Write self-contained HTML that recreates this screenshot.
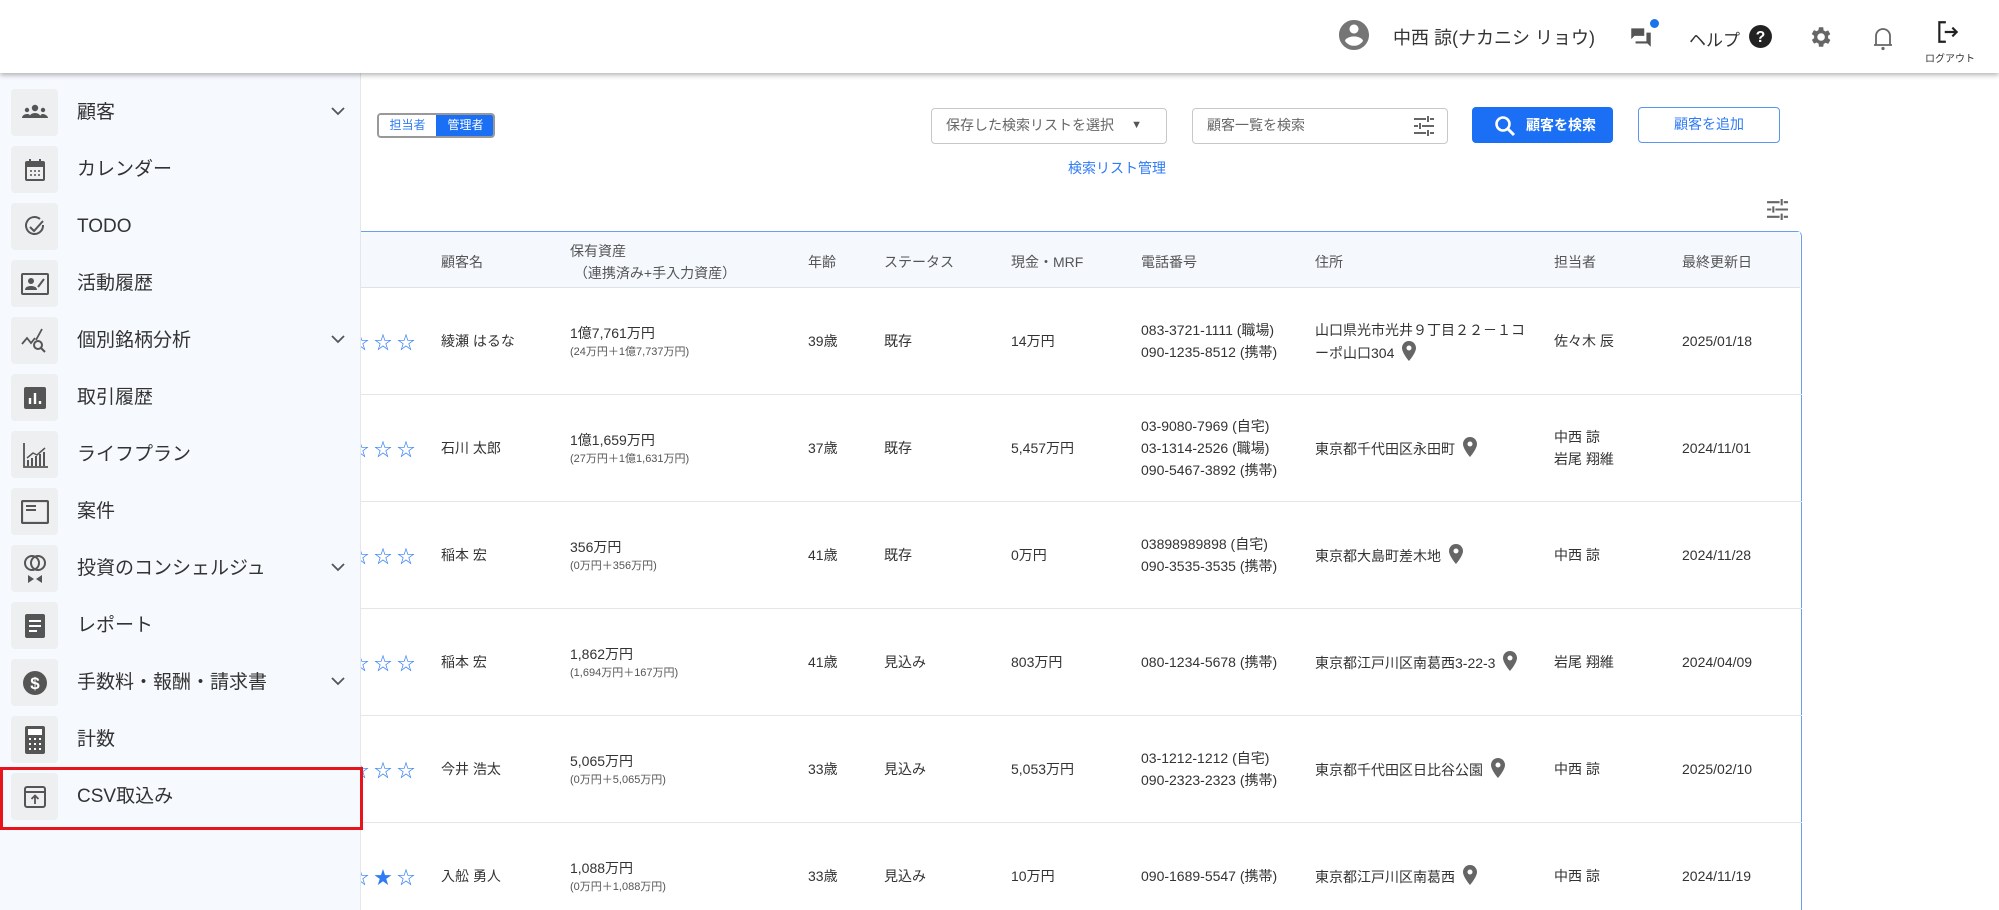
<!DOCTYPE html>
<html><head><meta charset="utf-8"><style>
*{box-sizing:border-box;margin:0;padding:0}
html{width:1999px;height:910px;overflow:hidden}
body{width:1999px;height:910px;overflow:hidden;background:#fff;font-family:"Liberation Sans","Noto Sans CJK JP",sans-serif;color:#333;position:relative}
.a{position:absolute}
#hdr{left:0;top:0;width:1999px;height:73px;background:#fff;box-shadow:0 2px 5px rgba(0,0,0,.3);z-index:5}
#side{left:0;top:73px;width:361px;height:837px;background:#f6f9fe;border-right:1px solid #e3e6ea;z-index:4}
.it{position:absolute;left:0;width:361px;height:47px}
.ib{position:absolute;left:11px;top:0;width:47px;height:47px;background:#eeeff1;border-radius:4px;display:flex;align-items:center;justify-content:center}
.it .t{position:absolute;left:77px;top:0;line-height:47px;font-size:19px;color:#333}
.chev{position:absolute;left:330px;top:16px}
.th{font-size:14px;color:#555}
.c{position:absolute;font-size:14px;color:#333;line-height:22px}
.s{font-size:11px;color:#555;line-height:16px}
.row{position:absolute;left:361px;width:1441px;border-bottom:1px solid #e4e6ea}
.star{position:absolute;font-size:18px;color:#2f7bf5}
.pin{display:inline-block;vertical-align:-3px;margin-left:8px}
</style></head><body>
<svg width="0" height="0" style="position:absolute"><defs><symbol id="pin" viewBox="0 0 14 20"><path d="M7 0C3.1 0 0 3.1 0 7c0 5 7 13 7 13s7-8 7-13c0-3.9-3.1-7-7-7zm0 9.5A2.5 2.5 0 117 4.5a2.5 2.5 0 010 5z" fill="#666"/></symbol></defs></svg>
<div id="hdr" class="a">
 <svg class="a" style="left:1336px;top:17px" width="36" height="36" viewBox="0 0 24 24"><path fill="#757575" d="M12 2C6.48 2 2 6.48 2 12s4.48 10 10 10 10-4.48 10-10S17.52 2 12 2zm0 3c1.66 0 3 1.34 3 3s-1.34 3-3 3-3-1.34-3-3 1.34-3 3-3zm0 14.2c-2.5 0-4.71-1.28-6-3.22.03-1.99 4-3.08 6-3.08 1.99 0 5.97 1.09 6 3.08-1.29 1.94-3.5 3.22-6 3.22z"/></svg>
 <div class="a" style="left:1393px;top:24px;font-size:18px;color:#333">中西 諒(ナカニシ リョウ)</div>
 <svg class="a" style="left:1628px;top:24px" width="26" height="26" viewBox="0 0 24 24"><path fill="#555" d="M15 4H3v10l3-3h9zm6 4h-4v8H7v2l1 0h10l3 3z"/></svg>
 <div class="a" style="left:1650px;top:19px;width:9px;height:9px;border-radius:50%;background:#1a73e8"></div>
 <div class="a" style="left:1689px;top:26px;font-size:17px;color:#333">ヘルプ</div>
 <svg class="a" style="left:1748px;top:24px" width="25" height="25" viewBox="0 0 24 24"><circle cx="12" cy="12" r="11" fill="#222"/><text x="12" y="17.5" font-size="15" font-weight="bold" fill="#fff" text-anchor="middle" font-family="Liberation Sans">?</text></svg>
 <svg class="a" style="left:1807px;top:24px" width="26" height="26" viewBox="0 0 24 24"><path fill="#666" d="M19.4 13a7.5 7.5 0 000-2l2.1-1.6-2-3.5-2.5 1a7 7 0 00-1.7-1L15 3h-4l-.4 2.7a7 7 0 00-1.7 1l-2.5-1-2 3.5L6.6 11a7.5 7.5 0 000 2l-2.1 1.6 2 3.5 2.5-1a7 7 0 001.7 1L11 21h4l.4-2.7a7 7 0 001.7-1l2.5 1 2-3.5zM13 15.5a3.5 3.5 0 110-7 3.5 3.5 0 010 7z"/></svg>
 <svg class="a" style="left:1871px;top:24px" width="24" height="28" viewBox="0 0 24 28"><path fill="none" stroke="#666" stroke-width="1.8" d="M5 21V12a7 7 0 0114 0v9zM3 21h18"/><circle cx="12" cy="24.5" r="1.6" fill="#666"/></svg>
 <svg class="a" style="left:1935px;top:19px" width="26" height="26" viewBox="0 0 24 24"><path fill="none" stroke="#222" stroke-width="2" d="M10 3H4v18h6M9 12h11M16 8l4 4-4 4"/></svg>
 <div class="a" style="left:1925px;top:50px;font-size:10px;color:#333">ログアウト</div>
</div>

<div id="side" class="a">
 <div class="it" style="top:16px"><div class="ib"><svg width="28" height="20" viewBox="0 0 28 20"><circle cx="14" cy="5" r="3.2" fill="#555"/><path d="M8 15c0-3 3-5 6-5s6 2 6 5z" fill="#555"/><circle cx="6" cy="7" r="2.2" fill="#555"/><circle cx="22" cy="7" r="2.2" fill="#555"/><path d="M1 15c0-2 2-4 5-4s3 1 3 4zM19 15c0-3 1-4 3-4s5 2 5 4z" fill="#555"/></svg></div><div class="t">顧客</div><svg class="chev" width="16" height="12"><path d="M2 3l6 6 6-6" fill="none" stroke="#555" stroke-width="1.8"/></svg></div>
 <div class="it" style="top:73px"><div class="ib"><svg width="22" height="24" viewBox="0 0 22 24"><rect x="2" y="4" width="18" height="18" rx="1" fill="none" stroke="#555" stroke-width="2"/><rect x="2" y="4" width="18" height="5" fill="#555"/><path d="M6 1v5M16 1v5" stroke="#555" stroke-width="2"/><path d="M6 13h2M10 13h2M14 13h2M6 17h2M10 17h2M14 17h2" stroke="#555" stroke-width="1.5"/></svg></div><div class="t">カレンダー</div></div>
 <div class="it" style="top:130px"><div class="ib"><svg width="24" height="24" viewBox="0 0 24 24"><path d="M20 10a8.5 8.5 0 11-3-6" fill="none" stroke="#555" stroke-width="2"/><path d="M7 12l4 4 9-10" fill="none" stroke="#555" stroke-width="2"/></svg></div><div class="t">TODO</div></div>
 <div class="it" style="top:187px"><div class="ib"><svg width="28" height="22" viewBox="0 0 28 22"><rect x="1" y="1" width="26" height="20" rx="1" fill="none" stroke="#555" stroke-width="2"/><circle cx="10" cy="8" r="3" fill="#555"/><path d="M4 17c0-3 3-4 6-4s6 1 6 4z" fill="#555"/><path d="M17 14l6-8" stroke="#555" stroke-width="2"/></svg></div><div class="t">活動履歴</div></div>
 <div class="it" style="top:244px"><div class="ib"><svg width="28" height="26" viewBox="0 0 28 26"><path d="M1 16l5-6 4 5 4-5M15 12l6-11" fill="none" stroke="#555" stroke-width="1.8"/><circle cx="17" cy="17" r="4" fill="none" stroke="#555" stroke-width="2"/><path d="M20 20l4 4" stroke="#555" stroke-width="2"/></svg></div><div class="t">個別銘柄分析</div><svg class="chev" width="16" height="12"><path d="M2 3l6 6 6-6" fill="none" stroke="#555" stroke-width="1.8"/></svg></div>
 <div class="it" style="top:301px"><div class="ib"><svg width="22" height="22" viewBox="0 0 22 22"><rect width="22" height="22" rx="2" fill="#555"/><path d="M6 17v-6M11 17V6M16 17v-3" stroke="#fff" stroke-width="2.4"/></svg></div><div class="t">取引履歴</div></div>
 <div class="it" style="top:358px"><div class="ib"><svg width="26" height="26" viewBox="0 0 26 26"><path d="M2 1v24h24" fill="none" stroke="#555" stroke-width="1.8"/><path d="M6 24v-6M10 24v-8M14 24v-10M18 24v-12M22 24v-14" stroke="#555" stroke-width="2"/><path d="M5 16l6-5 4 2 8-7" fill="none" stroke="#555" stroke-width="1.5"/></svg></div><div class="t">ライフプラン</div></div>
 <div class="it" style="top:415px"><div class="ib"><svg width="28" height="24" viewBox="0 0 28 24"><rect x="1" y="1" width="26" height="22" rx="1" fill="none" stroke="#555" stroke-width="2.2"/><path d="M5 6h10M5 10h10" stroke="#555" stroke-width="2"/></svg></div><div class="t">案件</div></div>
 <div class="it" style="top:472px"><div class="ib"><svg width="26" height="30" viewBox="0 0 26 30"><circle cx="10" cy="9" r="7" fill="none" stroke="#555" stroke-width="2"/><circle cx="16" cy="9" r="7" fill="none" stroke="#555" stroke-width="2"/><path d="M6 21l6 4-6 4zM20 21l-6 4 6 4z" fill="#555"/></svg></div><div class="t">投資のコンシェルジュ</div><svg class="chev" width="16" height="12"><path d="M2 3l6 6 6-6" fill="none" stroke="#555" stroke-width="1.8"/></svg></div>
 <div class="it" style="top:529px"><div class="ib"><svg width="20" height="24" viewBox="0 0 20 24"><rect width="20" height="24" rx="2" fill="#555"/><path d="M4 7h12M4 12h12M4 17h8" stroke="#fff" stroke-width="2"/></svg></div><div class="t">レポート</div></div>
 <div class="it" style="top:586px"><div class="ib"><svg width="26" height="26" viewBox="0 0 26 26"><circle cx="13" cy="13" r="12" fill="#555"/><text x="13" y="19" font-size="17" font-weight="bold" fill="#fff" text-anchor="middle" font-family="Liberation Sans">$</text></svg></div><div class="t">手数料・報酬・請求書</div><svg class="chev" width="16" height="12"><path d="M2 3l6 6 6-6" fill="none" stroke="#555" stroke-width="1.8"/></svg></div>
 <div class="it" style="top:643px"><div class="ib"><svg width="20" height="28" viewBox="0 0 20 28"><rect width="20" height="28" rx="2" fill="#555"/><rect x="3" y="3" width="14" height="6" fill="#fff"/><path d="M4 13h2M9 13h2M14 13h2M4 18h2M9 18h2M14 18h2M4 23h2M9 23h2M14 23h2" stroke="#fff" stroke-width="2"/></svg></div><div class="t">計数</div></div>
 <div class="it" style="top:700px"><div class="ib"><svg width="24" height="24" viewBox="0 0 24 24"><rect x="2" y="2" width="20" height="20" rx="2" fill="none" stroke="#555" stroke-width="2"/><path d="M2 7h20" stroke="#555" stroke-width="2"/><path d="M12 19v-8M8.5 14l3.5-3.5 3.5 3.5" fill="none" stroke="#555" stroke-width="1.8"/></svg></div><div class="t">CSV取込み</div></div>
</div>
<div class="a" style="left:0;top:767px;width:363px;height:63px;border:3px solid #e8141c;z-index:6"></div>

<div class="a" style="left:377px;top:113px;width:118px;height:25px;border:2px solid #999;border-radius:4px;overflow:hidden;font-size:12px">
 <div class="a" style="left:0;top:0;width:57px;height:21px;background:#fff;color:#2f7bf5;text-align:center;line-height:21px">担当者</div>
 <div class="a" style="left:57px;top:0;width:59px;height:21px;background:#1a6ff5;color:#fff;text-align:center;line-height:21px">管理者</div>
</div>
<div class="a" style="left:931px;top:108px;width:236px;height:36px;border:1.5px solid #c8c8c8;border-radius:4px;font-size:14px;color:#666;line-height:33px;padding-left:14px">保存した検索リストを選択<span style="position:absolute;right:24px;font-size:11px;color:#555">▼</span></div>
<div class="a" style="left:1192px;top:108px;width:256px;height:36px;border:1.5px solid #c8c8c8;border-radius:4px;font-size:14px;color:#666;line-height:33px;padding-left:14px">顧客一覧を検索
 <svg class="a" style="right:12px;top:7px" width="22" height="20" viewBox="0 0 22 20"><path d="M1 3h12M17 3h4M15 0v6M1 10h4M9 10h12M7 7v6M1 17h12M17 17h4M15 14v6" stroke="#666" stroke-width="2"/></svg></div>
<div class="a" style="left:1472px;top:107px;width:141px;height:36px;background:#1a6ff5;border-radius:4px;color:#fff;font-size:14px;line-height:36px;padding-left:54px;font-weight:bold">顧客を検索
 <svg class="a" style="left:22px;top:8px" width="22" height="22" viewBox="0 0 22 22"><circle cx="9" cy="9" r="6.5" fill="none" stroke="#fff" stroke-width="2.6"/><path d="M14 14l6 6" stroke="#fff" stroke-width="3"/></svg></div>
<div class="a" style="left:1638px;top:107px;width:142px;height:36px;border:1.5px solid #5b95f0;border-radius:4px;color:#2f7bf5;font-size:14px;line-height:33px;text-align:center">顧客を追加</div>
<div class="a" style="left:1068px;top:158px;font-size:14px;color:#2f7bf5">検索リスト管理</div>
<svg class="a" style="left:1766px;top:199px" width="23" height="21" viewBox="0 0 22 20"><path d="M1 3h12M17 3h4M15 0v6M1 10h4M9 10h12M7 7v6M1 17h12M17 17h4M15 14v6" stroke="#666" stroke-width="2"/></svg>

<div class="a" style="left:300px;top:231px;width:1502px;height:679px;border:1.5px solid #6a9ff0;border-bottom:none;border-radius:5px 5px 0 0"></div>
<div class="a" style="left:300px;top:232px;width:1500px;height:56px;background:#f5f8fd;border-bottom:1px solid #dfe3e8"></div>
<div class="a th" style="left:441px;top:252px">顧客名</div>
<div class="a th" style="left:570px;top:240px;line-height:22px">保有資産<br>&nbsp;（連携済み+手入力資産）</div>
<div class="a th" style="left:808px;top:252px">年齢</div>
<div class="a th" style="left:884px;top:252px">ステータス</div>
<div class="a th" style="left:1011px;top:252px">現金・MRF</div>
<div class="a th" style="left:1141px;top:252px">電話番号</div>
<div class="a th" style="left:1315px;top:252px">住所</div>
<div class="a th" style="left:1554px;top:252px">担当者</div>
<div class="a th" style="left:1682px;top:252px">最終更新日</div>

<div class="row" style="top:288px;height:107px"></div>
<div class="row" style="top:395px;height:107px"></div>
<div class="row" style="top:502px;height:107px"></div>
<div class="row" style="top:609px;height:107px"></div>
<div class="row" style="top:716px;height:107px"></div>

<span class="star" style="left:351px;top:329px">☆</span><span class="star" style="left:374px;top:329px">☆</span><span class="star" style="left:397px;top:329px">☆</span>
<div class="c" style="left:441px;top:330px">綾瀬 はるな</div>
<div class="c" style="left:570px;top:322px">1億7,761万円<div class="s">(24万円＋1億7,737万円)</div></div>
<div class="c" style="left:808px;top:330px">39歳</div><div class="c" style="left:884px;top:330px">既存</div><div class="c" style="left:1011px;top:330px">14万円</div>
<div class="c" style="left:1141px;top:319px">083-3721-1111 (職場)<br>090-1235-8512 (携帯)</div>
<div class="c" style="left:1315px;top:319px">山口県光市光井９丁目２２－１コ<br>ーポ山口304<svg class="pin" width="14" height="20"><use href="#pin"/></svg></div>
<div class="c" style="left:1554px;top:330px">佐々木 辰</div><div class="c" style="left:1682px;top:330px">2025/01/18</div>

<span class="star" style="left:351px;top:436px">☆</span><span class="star" style="left:374px;top:436px">☆</span><span class="star" style="left:397px;top:436px">☆</span>
<div class="c" style="left:441px;top:437px">石川 太郎</div>
<div class="c" style="left:570px;top:429px">1億1,659万円<div class="s">(27万円＋1億1,631万円)</div></div>
<div class="c" style="left:808px;top:437px">37歳</div><div class="c" style="left:884px;top:437px">既存</div><div class="c" style="left:1011px;top:437px">5,457万円</div>
<div class="c" style="left:1141px;top:415px">03-9080-7969 (自宅)<br>03-1314-2526 (職場)<br>090-5467-3892 (携帯)</div>
<div class="c" style="left:1315px;top:437px">東京都千代田区永田町<svg class="pin" width="14" height="20"><use href="#pin"/></svg></div>
<div class="c" style="left:1554px;top:426px">中西 諒<br>岩尾 翔維</div><div class="c" style="left:1682px;top:437px">2024/11/01</div>

<span class="star" style="left:351px;top:543px">☆</span><span class="star" style="left:374px;top:543px">☆</span><span class="star" style="left:397px;top:543px">☆</span>
<div class="c" style="left:441px;top:544px">稲本 宏</div>
<div class="c" style="left:570px;top:536px">356万円<div class="s">(0万円＋356万円)</div></div>
<div class="c" style="left:808px;top:544px">41歳</div><div class="c" style="left:884px;top:544px">既存</div><div class="c" style="left:1011px;top:544px">0万円</div>
<div class="c" style="left:1141px;top:533px">03898989898 (自宅)<br>090-3535-3535 (携帯)</div>
<div class="c" style="left:1315px;top:544px">東京都大島町差木地<svg class="pin" width="14" height="20"><use href="#pin"/></svg></div>
<div class="c" style="left:1554px;top:544px">中西 諒</div><div class="c" style="left:1682px;top:544px">2024/11/28</div>

<span class="star" style="left:351px;top:650px">☆</span><span class="star" style="left:374px;top:650px">☆</span><span class="star" style="left:397px;top:650px">☆</span>
<div class="c" style="left:441px;top:651px">稲本 宏</div>
<div class="c" style="left:570px;top:643px">1,862万円<div class="s">(1,694万円＋167万円)</div></div>
<div class="c" style="left:808px;top:651px">41歳</div><div class="c" style="left:884px;top:651px">見込み</div><div class="c" style="left:1011px;top:651px">803万円</div>
<div class="c" style="left:1141px;top:651px">080-1234-5678 (携帯)</div>
<div class="c" style="left:1315px;top:651px">東京都江戸川区南葛西3-22-3<svg class="pin" width="14" height="20"><use href="#pin"/></svg></div>
<div class="c" style="left:1554px;top:651px">岩尾 翔維</div><div class="c" style="left:1682px;top:651px">2024/04/09</div>

<span class="star" style="left:351px;top:757px">☆</span><span class="star" style="left:374px;top:757px">☆</span><span class="star" style="left:397px;top:757px">☆</span>
<div class="c" style="left:441px;top:758px">今井 浩太</div>
<div class="c" style="left:570px;top:750px">5,065万円<div class="s">(0万円＋5,065万円)</div></div>
<div class="c" style="left:808px;top:758px">33歳</div><div class="c" style="left:884px;top:758px">見込み</div><div class="c" style="left:1011px;top:758px">5,053万円</div>
<div class="c" style="left:1141px;top:747px">03-1212-1212 (自宅)<br>090-2323-2323 (携帯)</div>
<div class="c" style="left:1315px;top:758px">東京都千代田区日比谷公園<svg class="pin" width="14" height="20"><use href="#pin"/></svg></div>
<div class="c" style="left:1554px;top:758px">中西 諒</div><div class="c" style="left:1682px;top:758px">2025/02/10</div>

<span class="star" style="left:351px;top:864px">☆</span><span class="star" style="left:374px;top:864px">★</span><span class="star" style="left:397px;top:864px">☆</span>
<div class="c" style="left:441px;top:865px">入舩 勇人</div>
<div class="c" style="left:570px;top:857px">1,088万円<div class="s">(0万円＋1,088万円)</div></div>
<div class="c" style="left:808px;top:865px">33歳</div><div class="c" style="left:884px;top:865px">見込み</div><div class="c" style="left:1011px;top:865px">10万円</div>
<div class="c" style="left:1141px;top:865px">090-1689-5547 (携帯)</div>
<div class="c" style="left:1315px;top:865px">東京都江戸川区南葛西<svg class="pin" width="14" height="20"><use href="#pin"/></svg></div>
<div class="c" style="left:1554px;top:865px">中西 諒</div><div class="c" style="left:1682px;top:865px">2024/11/19</div>
</body></html>
